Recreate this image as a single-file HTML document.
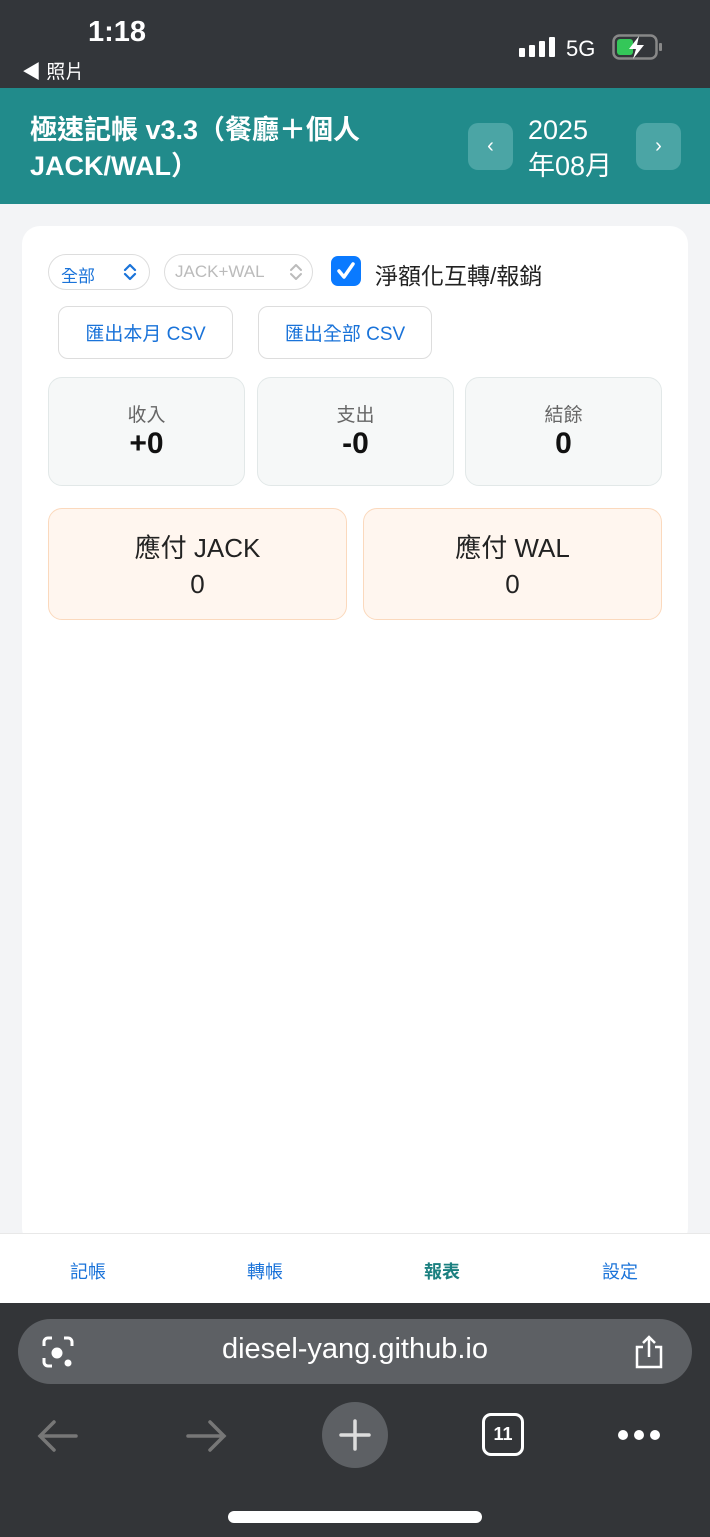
<!DOCTYPE html>
<html><head><meta charset="utf-8"><style>
*{margin:0;padding:0;box-sizing:border-box}
body{width:710px;height:1537px;position:relative;overflow:hidden;background:#f3f4f6;font-family:"Liberation Sans","Noto Sans CJK TC",sans-serif}
.a{position:absolute}
.c{display:flex;align-items:center;justify-content:center}
</style></head><body>
<div class="a" style="left:0;top:0;width:710px;height:88px;background:#33363a"></div>
<div class="a" style="left:88px;top:16px;color:#fff;font-size:29px;font-weight:bold">1:18</div>
<div class="a" style="left:22px;top:57px;color:#fff;font-size:19px">◀ 照片</div>
<div class="a" style="left:519px;top:48px;width:6px;height:9px;background:#fff;border-radius:1px"></div>
<div class="a" style="left:529px;top:45px;width:6px;height:12px;background:#fff;border-radius:1px"></div>
<div class="a" style="left:539px;top:41px;width:6px;height:16px;background:#fff;border-radius:1px"></div>
<div class="a" style="left:549px;top:37px;width:6px;height:20px;background:#fff;border-radius:1px"></div>
<div class="a" style="left:566px;top:36px;color:#fff;font-size:22px">5G</div>
<svg class="a" style="left:612px;top:34px" width="52" height="28" viewBox="0 0 52 28"><rect x="1.5" y="1.5" width="43" height="23" rx="6" fill="none" stroke="#888" stroke-width="2.5"/><rect x="5" y="5" width="16" height="16" rx="3" fill="#34c759"/><rect x="47" y="9" width="3" height="8" rx="1" fill="#888"/><path d="M27 2 17 15h7l-3 10 11-14h-7z" fill="#fff"/></svg>

<div class="a" style="left:0;top:88px;width:710px;height:116px;background:#218b8b"></div>
<div class="a" style="left:30px;top:112px;color:#fff;font-size:27px;font-weight:bold;line-height:36px;width:420px">極速記帳 v3.3（餐廳＋個人 JACK/WAL）</div>
<div class="a c" style="left:468px;top:123px;width:45px;height:47px;background:#4ba5a5;border-radius:10px;color:#fff;font-size:20px">‹</div>
<div class="a" style="left:528px;top:112px;color:#fff;font-size:27px;line-height:36px">2025<br>年08月</div>
<div class="a c" style="left:636px;top:123px;width:45px;height:47px;background:#4ba5a5;border-radius:10px;color:#fff;font-size:20px">›</div>

<div class="a" style="left:22px;top:226px;width:666px;height:1020px;background:#fff;border-radius:18px"></div>
<div class="a" style="left:48px;top:254px;width:102px;height:36px;border:1.5px solid #ddd;border-radius:18px;color:#1a73d9;font-size:17px;padding:7px 0 0 12px">全部</div>
<svg class="a" style="left:123px;top:262px" width="14" height="20" viewBox="0 0 14 20" fill="none" stroke="#1a73d9" stroke-width="2.2" stroke-linecap="round" stroke-linejoin="round"><path d="M2 8l5-5 5 5M2 12l5 5 5-5"/></svg>
<div class="a" style="left:164px;top:254px;width:149px;height:36px;border:1.5px solid #ddd;border-radius:18px;color:#bbb;font-size:17px;padding:7px 0 0 10px">JACK+WAL</div>
<svg class="a" style="left:289px;top:262px" width="14" height="20" viewBox="0 0 14 20" fill="none" stroke="#bbb" stroke-width="2" stroke-linecap="round" stroke-linejoin="round"><path d="M2 8l5-5 5 5M2 12l5 5 5-5"/></svg>
<div class="a" style="left:331px;top:256px;width:30px;height:30px;background:#0a7aff;border-radius:7px"></div>
<svg class="a" style="left:331px;top:256px" width="30" height="30" viewBox="0 0 30 30" fill="none" stroke="#fff" stroke-width="3.5" stroke-linecap="round" stroke-linejoin="round"><path d="M8 15l5 6 9-13"/></svg>
<div class="a" style="left:375px;top:257px;color:#222;font-size:23px">淨額化互轉/報銷</div>
<div class="a c" style="left:58px;top:306px;width:175px;height:53px;border:1.5px solid #ddd;border-radius:10px;color:#1a73d9;font-size:19px">匯出本月 CSV</div>
<div class="a c" style="left:258px;top:306px;width:174px;height:53px;border:1.5px solid #ddd;border-radius:10px;color:#1a73d9;font-size:19px">匯出全部 CSV</div>

<div class="a" style="left:48px;top:377px;width:197px;height:109px;background:#f6f8f8;border:1.5px solid #e2e8e8;border-radius:14px;text-align:center"><div style="margin-top:22px;font-size:19px;color:#666">收入</div><div style="font-size:30px;font-weight:bold;color:#111">+0</div></div>
<div class="a" style="left:257px;top:377px;width:197px;height:109px;background:#f6f8f8;border:1.5px solid #e2e8e8;border-radius:14px;text-align:center"><div style="margin-top:22px;font-size:19px;color:#666">支出</div><div style="font-size:30px;font-weight:bold;color:#111">-0</div></div>
<div class="a" style="left:465px;top:377px;width:197px;height:109px;background:#f6f8f8;border:1.5px solid #e2e8e8;border-radius:14px;text-align:center"><div style="margin-top:22px;font-size:19px;color:#666">結餘</div><div style="font-size:30px;font-weight:bold;color:#111">0</div></div>

<div class="a" style="left:48px;top:508px;width:299px;height:112px;background:#fff6ef;border:1.5px solid #fbd9bd;border-radius:14px;text-align:center;font-size:26px;color:#222;line-height:36px;padding-top:21px">應付 JACK<br>0</div>
<div class="a" style="left:363px;top:508px;width:299px;height:112px;background:#fff6ef;border:1.5px solid #fbd9bd;border-radius:14px;text-align:center;font-size:26px;color:#222;line-height:36px;padding-top:21px">應付 WAL<br>0</div>

<div class="a" style="left:0;top:1233px;width:710px;height:70px;background:#fff;border-top:1px solid #e8e8e8"></div>
<div class="a" style="left:70px;top:1258px;color:#1a73d9;font-size:18px">記帳</div>
<div class="a" style="left:247px;top:1258px;color:#1a73d9;font-size:18px">轉帳</div>
<div class="a" style="left:424px;top:1258px;color:#1a7f7f;font-size:18px;font-weight:bold">報表</div>
<div class="a" style="left:602px;top:1258px;color:#1a73d9;font-size:18px">設定</div>

<div class="a" style="left:0;top:1303px;width:710px;height:234px;background:#333538"></div>
<div class="a" style="left:18px;top:1319px;width:674px;height:65px;background:#5d6064;border-radius:33px"></div>
<svg class="a" style="left:40px;top:1334px" width="36" height="36" viewBox="0 0 36 36" fill="none" stroke="#fff" stroke-width="3"><path d="M4 12V8a4 4 0 0 1 4-4h4M24 4h4a4 4 0 0 1 4 4v4M4 24v4a4 4 0 0 0 4 4h4"/><circle cx="17" cy="19" r="4" fill="#fff"/><circle cx="28" cy="29" r="3.5" fill="#fff" stroke="none"/></svg>
<div class="a" style="left:0;top:1333px;width:710px;text-align:center;color:#fff;font-size:29px">diesel-yang.github.io</div>
<svg class="a" style="left:632px;top:1334px" width="34" height="36" viewBox="0 0 34 36" fill="none" stroke="#fff" stroke-width="2.5"><path d="M11 13H5v20h24V13h-6M17 23V3M11 9l6-6 6 6"/></svg>
<svg class="a" style="left:36px;top:1418px" width="44" height="36" viewBox="0 0 44 36" fill="none" stroke="#777" stroke-width="3.5" stroke-linecap="round"><path d="M40 18H4M18 4 4 18l14 14"/></svg>
<svg class="a" style="left:184px;top:1418px" width="44" height="36" viewBox="0 0 44 36" fill="none" stroke="#777" stroke-width="3.5" stroke-linecap="round"><path d="M4 18h36M26 4l14 14-14 14"/></svg>
<div class="a" style="left:322px;top:1402px;width:66px;height:66px;border-radius:50%;background:#5d6064"></div>
<svg class="a" style="left:338px;top:1418px" width="34" height="34" viewBox="0 0 34 34" stroke="#ddd" stroke-width="3.5" stroke-linecap="round"><path d="M17 3v28M3 17h28"/></svg>
<div class="a c" style="left:482px;top:1413px;width:42px;height:43px;border:3px solid #fff;border-radius:9px;color:#fff;font-size:18px;font-weight:bold">11</div>
<div class="a" style="left:618px;top:1430px;width:10px;height:10px;border-radius:50%;background:#fff"></div>
<div class="a" style="left:634px;top:1430px;width:10px;height:10px;border-radius:50%;background:#fff"></div>
<div class="a" style="left:650px;top:1430px;width:10px;height:10px;border-radius:50%;background:#fff"></div>
<div class="a" style="left:228px;top:1511px;width:254px;height:12px;border-radius:6px;background:#fff"></div>
</body></html>
